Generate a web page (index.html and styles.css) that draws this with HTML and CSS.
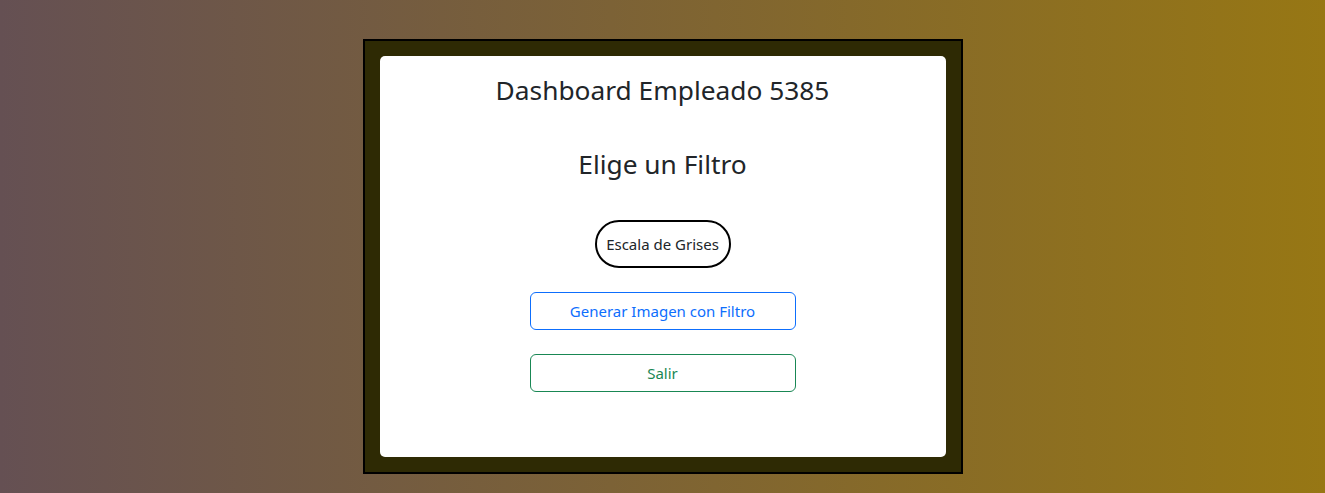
FILE: index.html
```html
<!DOCTYPE html>
<html lang="es">
<head>
<meta charset="utf-8">
<title>Dashboard Empleado</title>
<link rel="stylesheet" href="styles.css">
</head>
<body>
<main class="frame">
  <section class="card">
    <h3 class="title">Dashboard Empleado 5385</h3>
    <h3 class="subtitle">Elige un Filtro</h3>
    <div class="filters">
      <button class="pill">Escala de Grises</button>
    </div>
    <div class="actions">
      <button class="btn btn-primary">Generar Imagen con Filtro</button>
      <button class="btn btn-success">Salir</button>
    </div>
  </section>
</main>
</body>
</html>
```
FILE: styles.css
```css
html, body {
  margin: 0;
  padding: 0;
}
body {
  min-height: 100vh;
  background: linear-gradient(to right, #655053, #977714);
  font-family: "Noto Sans", "Open Sans", sans-serif;
  color: #212529;
  padding-top: 39px;
  box-sizing: border-box;
}
.frame {
  width: 600px;
  margin: 0 auto;
  box-sizing: border-box;
  border: 2px solid #000;
  background: #2e2a04;
  padding: 15px;
}
.card {
  background: #fff;
  border-radius: 5px;
  height: 401px;
  box-sizing: border-box;
  padding: 19px 0 0;
  display: flex;
  flex-direction: column;
  align-items: center;
}
.title, .subtitle {
  margin: 0;
  font-size: 26.3px;
  font-weight: 400;
  line-height: 1.2;
}
.subtitle {
  margin-top: 42px;
}
.filters {
  margin-top: 40px;
}
.pill {
  font-family: inherit;
  font-size: 15px;
  color: #212529;
  background: #fff;
  border: 2px solid #000;
  border-radius: 24px;
  height: 48px;
  width: 136px;
  padding: 0;
}
.actions {
  margin-top: 24px;
  display: flex;
  flex-direction: column;
  gap: 24px;
}
.btn {
  width: 266px;
  height: 38px;
  font-family: inherit;
  font-size: 15px;
  background: #fff;
  border-radius: 6px;
  border: 1px solid;
}
.btn-primary {
  color: #0d6efd;
  border-color: #0d6efd;
}
.btn-success {
  color: #198754;
  border-color: #198754;
}
```
